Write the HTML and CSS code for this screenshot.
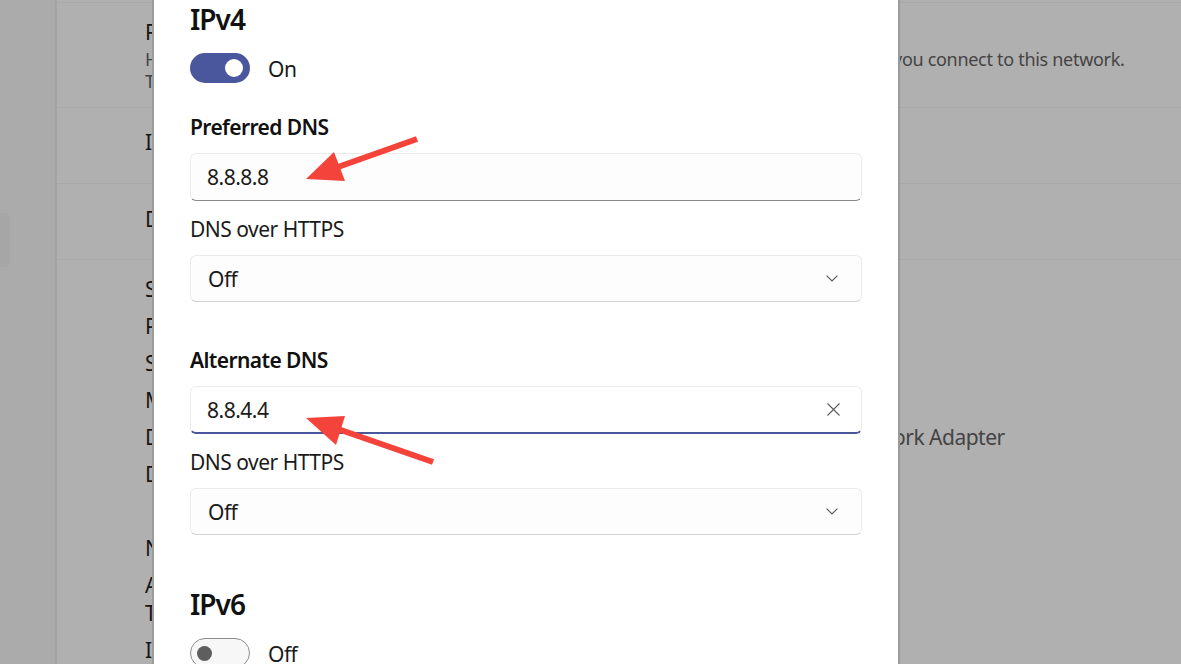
FILE: index.html
```html
<!DOCTYPE html>
<html lang="en">
<head>
<meta charset="utf-8">
<title>Edit DNS settings</title>
<link rel="stylesheet" href="styles.css">
</head>
<body>
<div class="page">
  <nav class="nav">
    <div class="nav-item"></div>
  </nav>
  <main class="content">
    <div class="setting-row row-random">
      <div class="line"><span class="lead label">Random hardware addresses</span><span class="tail"></span></div>
      <div class="line desc"><span class="lead">Help protect your privacy by making it harder for people to track your device location when</span><span class="tail">you connect to this network.</span></div>
      <div class="line desc"><span class="lead">The setting takes effect the next time you connect.</span><span class="tail"></span></div>
    </div>
    <div class="setting-row row-ip">
      <div class="line"><span class="lead label">IP assignment:</span><span class="tail"></span></div>
    </div>
    <div class="setting-row row-dns">
      <div class="line"><span class="lead label">DNS server assignment:</span><span class="tail"></span></div>
    </div>
    <div class="props">
      <span class="prop-name">SSID:</span><span class="prop-value">HomeNetwork</span><span class="prop-tail"></span>
      <span class="prop-name">Protocol:</span><span class="prop-value">Wi-Fi 5 (802.11ac)</span><span class="prop-tail"></span>
      <span class="prop-name">Security type:</span><span class="prop-value">WPA2-Personal</span><span class="prop-tail"></span>
      <span class="prop-name">Manufacturer:</span><span class="prop-value">Intel Corporation</span><span class="prop-tail"></span>
      <span class="prop-name">Description:</span><span class="prop-value">Intel(R) Dual Band Wireless-AC 3168 Netw</span><span class="prop-tail">ork Adapter</span>
      <span class="prop-name">Driver version:</span><span class="prop-value">20.70.16.4</span><span class="prop-tail"></span>
      <span class="prop-name"></span><span class="prop-value"></span><span class="prop-tail"></span>
      <span class="prop-name">Network band:</span><span class="prop-value">5 GHz</span><span class="prop-tail"></span>
      <span class="prop-name">Aggregated link speed (Receive/ Transmit):</span><span class="prop-value">433/433 (Mbps)</span><span class="prop-tail"></span>
      <span class="prop-name">IPv6 address:</span><span class="prop-value">fe80::1c2d:3e4f</span><span class="prop-tail"></span>
    </div>
  </main>
</div>

<div class="dialog">
  <h2 class="section-title">IPv4</h2>
  <div class="toggle-row">
    <span class="toggle toggle-on"><span class="knob"></span></span>
    <span class="toggle-text">On</span>
  </div>

  <div class="dns-block">
    <div class="field-label">Preferred DNS</div>
    <div class="textbox">
      <span class="textbox-value">8.8.8.8</span>
    </div>
    <div class="sub-label">DNS over HTTPS</div>
    <div class="select">
      <span class="select-value">Off</span>
      <svg class="chevron" width="12" height="7" viewBox="0 0 12 7"><path d="M0.6 0.6 L6 6 L11.4 0.6" fill="none" stroke="#5c5c5c" stroke-width="1.2"/></svg>
    </div>
  </div>

  <div class="dns-block">
    <div class="field-label">Alternate DNS</div>
    <div class="textbox textbox-focused">
      <span class="textbox-value">8.8.4.4</span>
      <svg class="clear" width="13" height="13" viewBox="0 0 13 13"><path d="M0.5 0.5 L12.5 12.5 M12.5 0.5 L0.5 12.5" fill="none" stroke="#5c5c5c" stroke-width="1.1"/></svg>
    </div>
    <div class="sub-label">DNS over HTTPS</div>
    <div class="select">
      <span class="select-value">Off</span>
      <svg class="chevron" width="12" height="7" viewBox="0 0 12 7"><path d="M0.6 0.6 L6 6 L11.4 0.6" fill="none" stroke="#5c5c5c" stroke-width="1.2"/></svg>
    </div>
  </div>

  <h2 class="section-title section-ipv6">IPv6</h2>
  <div class="toggle-row">
    <span class="toggle toggle-off"><span class="knob"></span></span>
    <span class="toggle-text">Off</span>
  </div>
</div>

<svg class="annotations" width="1181" height="664" viewBox="0 0 1181 664">
  <line x1="417" y1="139" x2="338" y2="167" stroke="#f4433a" stroke-width="6"/>
  <polygon points="306,179 334,152 345,181" fill="#f4433a"/>
  <line x1="433" y1="462" x2="338" y2="429" stroke="#f4433a" stroke-width="6"/>
  <polygon points="306,418 345,416 336,445" fill="#f4433a"/>
</svg>
</body>
</html>
```

FILE: styles.css
```css
* { box-sizing: border-box; }

html, body {
  margin: 0;
  padding: 0;
  width: 1181px;
  height: 664px;
  overflow: hidden;
}

body {
  position: relative;
  font-family: "Noto Sans", "Open Sans", sans-serif;
  letter-spacing: -0.5px;
  background: #b0b0b0;
  color: #151515;
}

/* ---------- dimmed background page ---------- */
.page {
  display: flex;
  height: 664px;
  overflow: hidden;
}

.nav {
  width: 57px;
  flex: none;
  background: #ababab;
  border-right: 2px solid #a3a3a3;
}

.nav-item {
  margin-top: 213px;
  width: 10px;
  height: 54px;
  background: #a6a6a6;
  border-radius: 0 5px 5px 0;
}

.content {
  flex: 1;
  padding-top: 2px;
  padding-left: 88px;
  overflow: hidden;
}

.setting-row {
  margin-left: -88px;
  padding-left: 88px;
  border-top: 1px solid #a8a8a8;
}

.row-random { padding-top: 15px; height: 105px; }
.row-ip { padding-top: 20px; height: 76px; }
.row-dns { padding-top: 21px; height: 77px; border-bottom: 1px solid #a8a8a8; }

.line {
  display: flex;
  white-space: nowrap;
}

.lead {
  width: 748px;
  flex: none;
  overflow: hidden;
}

.label {
  font-size: 21px;
  line-height: 28px;
}

.desc {
  font-size: 18px;
  line-height: 22px;
  letter-spacing: -0.3px;
  color: #444444;
}

.row-random .line + .desc { margin-top: 2px; }
.row-random .desc + .desc { margin-top: 0; }

.tail {
  white-space: nowrap;
}

.props {
  padding-top: 15px;
  display: grid;
  grid-template-columns: 340px 408px 1fr;
  row-gap: 9px;
  font-size: 21px;
  line-height: 28px;
  color: #151515;
}

.prop-name, .prop-value, .prop-tail {
  min-height: 28px;
}

.prop-value {
  white-space: nowrap;
  overflow: hidden;
}

.prop-tail {
  color: #444444;
  white-space: nowrap;
}

/* ---------- dialog ---------- */
.dialog {
  position: absolute;
  left: 152px;
  top: 0;
  bottom: 0;
  width: 748px;
  overflow: hidden;
  background: #ffffff;
  border-left: 2px solid #9b9b9b;
  border-right: 2px solid #9b9b9b;
  padding: 1px 36px 0 36px;
  color: #1b1b1b;
}

.section-title {
  margin: 0;
  font-size: 28px;
  line-height: 36px;
  font-weight: 600;
  letter-spacing: -1px;
  color: #111111;
}

.section-ipv6 {
  margin-top: 51px;
}

.toggle-row {
  margin-top: 16px;
  height: 30px;
  display: flex;
  align-items: center;
  gap: 18px;
}

.toggle {
  width: 60px;
  height: 30px;
  border-radius: 15px;
  display: flex;
  align-items: center;
  flex: none;
}

.toggle-on {
  background: #4b579c;
  justify-content: flex-end;
  padding-right: 7px;
}

.toggle-on .knob {
  width: 18px;
  height: 18px;
  border-radius: 50%;
  background: #ffffff;
}

.toggle-off {
  background: #f7f7f7;
  border: 1.5px solid #8c8c8c;
  padding-left: 6px;
}

.toggle-off .knob {
  width: 15px;
  height: 15px;
  border-radius: 50%;
  background: #5e5e5e;
}

.toggle-text {
  font-size: 21px;
  line-height: 28px;
  padding-top: 2px;
}

.field-label {
  margin-top: 30px;
  font-size: 21px;
  line-height: 28px;
  font-weight: 600;
  letter-spacing: -0.6px;
  color: #111111;
}

.dns-block + .dns-block .field-label {
  margin-top: 44px;
}

.textbox, .select {
  margin-top: 12px;
  display: flex;
  align-items: center;
  justify-content: space-between;
  background: #fdfdfd;
  border: 1px solid #ebebeb;
  border-radius: 6px;
  padding: 0 21px 0 16px;
  font-size: 21px;
  line-height: 28px;
}

.textbox {
  height: 48px;
  border-bottom: 1px solid #8a8a8a;
}

.textbox-focused {
  background: #ffffff;
  border-bottom: 2px solid #4b579c;
}

.select {
  height: 47px;
  border-bottom-color: #d2d2d2;
  padding-left: 17px;
  padding-right: 23px;
}

.sub-label {
  margin-top: 14px;
  font-size: 21px;
  line-height: 28px;
}

.chevron, .clear {
  flex: none;
  display: block;
}

/* ---------- annotations overlay ---------- */
.annotations {
  position: absolute;
  left: 0;
  top: 0;
  pointer-events: none;
}
```
